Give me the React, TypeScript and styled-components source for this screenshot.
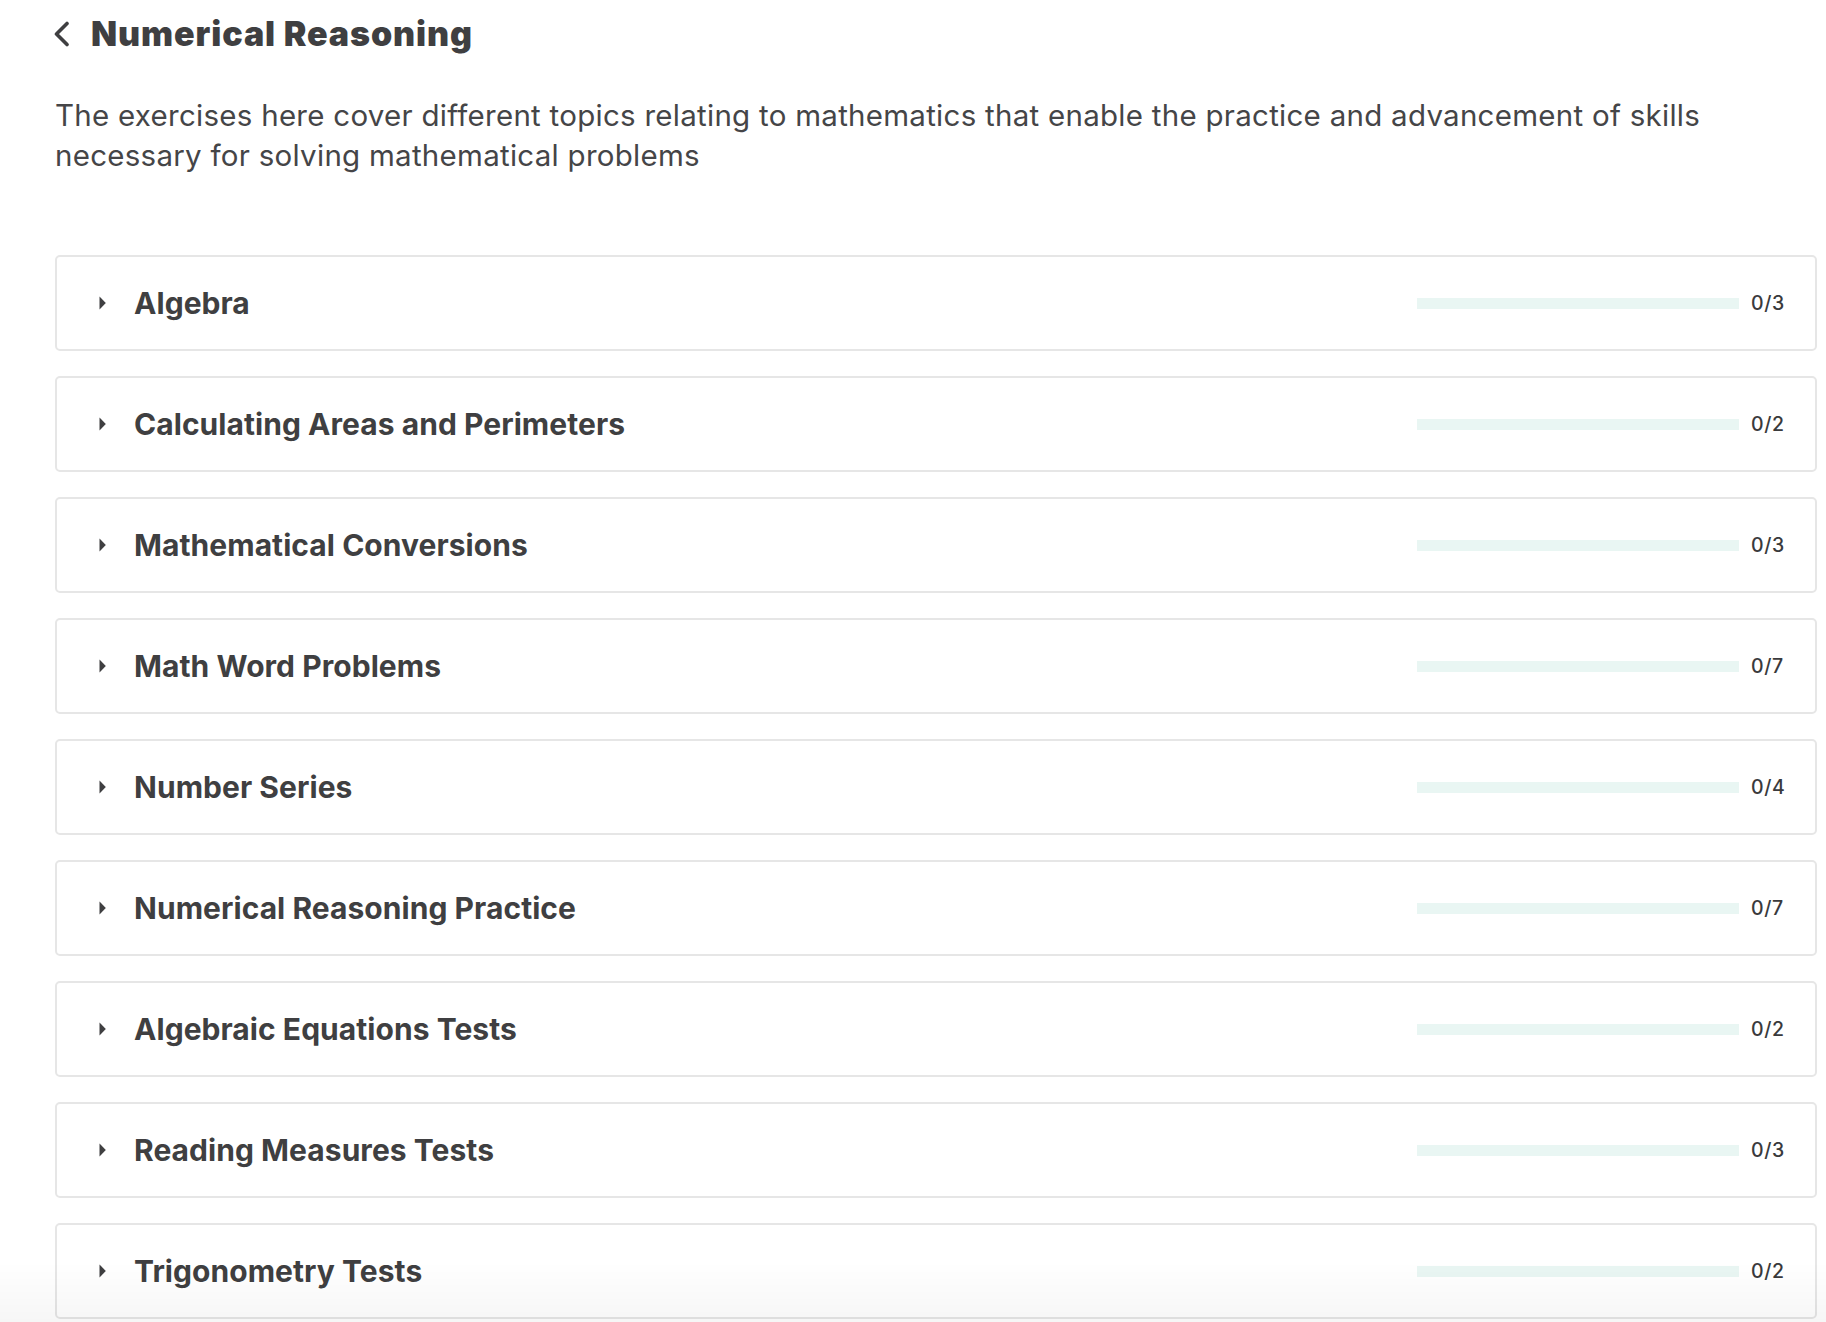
import React from "react";
import styled, { createGlobalStyle } from "styled-components";

const GlobalStyle = createGlobalStyle`
  html, body {
    margin: 0;
    padding: 0;
    background: #ffffff;
  }
  body {
    font-family: Inter, "Noto Sans", "Liberation Sans", sans-serif;
    color: #3f3f41;
    -webkit-font-smoothing: antialiased;
  }
  * { box-sizing: border-box; }
`;

const Page = styled.main`
  padding: 14px 9px 0 55px;
  display: flex;
  flex-direction: column;
`;

const Header = styled.header`
  display: flex;
  align-items: center;
  gap: 20px;
  height: 40px;
`;

const BackButton = styled.button`
  margin-left: -2px;
  padding: 0;
  border: none;
  background: none;
  display: flex;
  align-items: center;
  color: #3f3f41;
  cursor: pointer;
`;

const Title = styled.h1`
  margin: 0;
  font-size: 34px;
  line-height: 40px;
  font-weight: 900;
  color: #3f3f41;
  letter-spacing: 0.9px;
`;

const Description = styled.p`
  margin: 41px 0 0 0;
  font-size: 29.5px;
  line-height: 40px;
  font-weight: 400;
  color: #454547;
  letter-spacing: 0.27px;
`;

const List = styled.section`
  margin-top: 80px;
  display: flex;
  flex-direction: column;
  gap: 25px;
`;

const Card = styled.div`
  height: 96px;
  border: 2px solid #e6e6e6;
  border-radius: 5px;
  display: flex;
  align-items: center;
  padding: 0 24px 0 42px;
  background: #ffffff;
`;

const Caret = styled.span`
  display: flex;
  width: 7px;
  color: #3f3f41;
`;

const RowTitle = styled.span`
  margin-left: 28px;
  flex: 1;
  font-size: 30px;
  font-weight: 700;
  color: #3f3f41;
  letter-spacing: 0.05px;
`;

const Bar = styled.div`
  width: 322px;
  height: 11px;
  background: #e9f6f3;
  margin-right: 12px;
`;

const Count = styled.span`
  width: 40px;
  font-size: 19.5px;
  font-weight: 500;
  color: #3a3a3c;
  letter-spacing: 0.6px;
`;

const Fade = styled.div`
  position: fixed;
  left: 0;
  right: 0;
  bottom: 0;
  height: 60px;
  pointer-events: none;
  background: linear-gradient(to bottom, rgba(0, 0, 0, 0), rgba(0, 0, 0, 0.035));
`;

const topics: { name: string; total: number }[] = [
  { name: "Algebra", total: 3 },
  { name: "Calculating Areas and Perimeters", total: 2 },
  { name: "Mathematical Conversions", total: 3 },
  { name: "Math Word Problems", total: 7 },
  { name: "Number Series", total: 4 },
  { name: "Numerical Reasoning Practice", total: 7 },
  { name: "Algebraic Equations Tests", total: 2 },
  { name: "Reading Measures Tests", total: 3 },
  { name: "Trigonometry Tests", total: 2 },
];

export default function App() {
  return (
    <>
      <GlobalStyle />
      <Page>
        <Header>
          <BackButton aria-label="Back">
            <svg width="18" height="26" viewBox="0 0 18 26" fill="none">
              <polyline
                points="14,2.5 3.5,13 14,23.5"
                stroke="currentColor"
                strokeWidth="3.6"
                strokeLinecap="round"
                strokeLinejoin="round"
              />
            </svg>
          </BackButton>
          <Title>Numerical Reasoning</Title>
        </Header>
        <Description>
          The exercises here cover different topics relating to mathematics that enable the practice and
          advancement of skills necessary for solving mathematical problems
        </Description>
        <List>
          {topics.map((t) => (
            <Card key={t.name}>
              <Caret>
                <svg width="7" height="14" viewBox="0 0 7 14">
                  <polygon points="0.5,0.5 6.8,7 0.5,13.5" fill="currentColor" />
                </svg>
              </Caret>
              <RowTitle>{t.name}</RowTitle>
              <Bar />
              <Count>0/{t.total}</Count>
            </Card>
          ))}
        </List>
      </Page>
      <Fade />
    </>
  );
}
